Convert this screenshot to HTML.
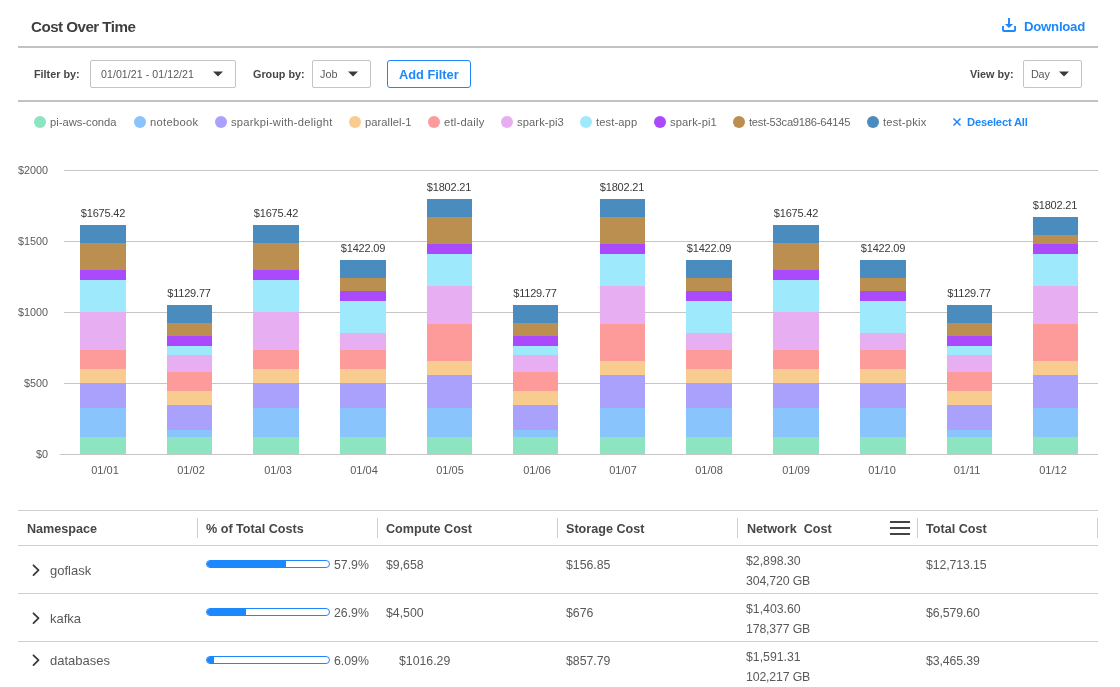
<!DOCTYPE html>
<html><head><meta charset="utf-8"><title>Cost Over Time</title>
<style>
html,body{margin:0;padding:0;background:#fff;width:1120px;height:687px;overflow:hidden;}
body{position:relative;font-family:"Liberation Sans", sans-serif;}
.t{position:absolute;line-height:1;white-space:nowrap;will-change:transform;}
.r{position:absolute;}
</style></head><body>
<div class="t" style="left:30.50px;top:19.13px;font-size:15.2px;color:#3f3f3f;font-weight:bold;letter-spacing:-0.55px;">Cost Over Time</div>
<svg class="r" style="left:1001px;top:17px" width="17" height="16" viewBox="0 0 17 16">
<path d="M8 1 V8.5" stroke="#1d87fc" stroke-width="1.9" fill="none"/>
<path d="M3.9 7 H12.1 L8 11.1 Z" fill="#1d87fc"/>
<path d="M2 9 V13 Q2 14.05 3.1 14.05 H13 Q14.1 14.05 14.1 13 V9" stroke="#1d87fc" stroke-width="1.9" fill="none"/>
</svg>
<div class="t" style="left:1024.00px;top:19.83px;font-size:13.2px;color:#1d87fc;font-weight:bold;letter-spacing:-0.25px;">Download</div>
<div class="r" style="left:18px;top:46px;width:1080px;height:2px;background:#c2c2c2;"></div>
<div class="t" style="left:34.10px;top:68.56px;font-size:10.8px;color:#464646;font-weight:bold;">Filter by:</div>
<div class="r" style="left:90px;top:60px;width:146px;height:28px;background:#fff;border:1px solid #c4c4c4;border-radius:2px;box-sizing:border-box;"></div>
<div class="t" style="left:100.70px;top:68.93px;font-size:10.6px;color:#595959;font-weight:normal;letter-spacing:0.06px;">01/01/21 - 01/12/21</div>
<svg class="r" style="left:213px;top:71px" width="10" height="6" viewBox="0 0 10 6"><path d="M0 0.5 H10 L5 5.5 Z" fill="#3a3a3a"/></svg>
<div class="t" style="left:252.90px;top:68.56px;font-size:10.8px;color:#464646;font-weight:bold;">Group by:</div>
<div class="r" style="left:312px;top:60px;width:59px;height:28px;background:#fff;border:1px solid #c4c4c4;border-radius:2px;box-sizing:border-box;"></div>
<div class="t" style="left:320.40px;top:68.76px;font-size:10.8px;color:#595959;font-weight:normal;">Job</div>
<svg class="r" style="left:348px;top:71px" width="10" height="6" viewBox="0 0 10 6"><path d="M0 0.5 H10 L5 5.5 Z" fill="#3a3a3a"/></svg>
<div class="r" style="left:387px;top:60px;width:84px;height:28px;background:#fff;border:1.5px solid #1d87fc;border-radius:3px;box-sizing:border-box;"></div>
<div class="t" style="left:399.20px;top:68.56px;font-size:12.8px;color:#1d87fc;font-weight:bold;">Add Filter</div>
<div class="t" style="left:970.30px;top:68.56px;font-size:10.8px;color:#464646;font-weight:bold;">View by:</div>
<div class="r" style="left:1023px;top:60px;width:59px;height:28px;background:#fff;border:1px solid #c4c4c4;border-radius:2px;box-sizing:border-box;"></div>
<div class="t" style="left:1031.40px;top:68.76px;font-size:10.8px;color:#595959;font-weight:normal;letter-spacing:-0.2px;">Day</div>
<svg class="r" style="left:1059px;top:71px" width="10" height="6" viewBox="0 0 10 6"><path d="M0 0.5 H10 L5 5.5 Z" fill="#3a3a3a"/></svg>
<div class="r" style="left:18px;top:100px;width:1080px;height:2px;background:#c2c2c2;"></div>
<div class="r" style="left:34px;top:116px;width:12px;height:12px;border-radius:50%;background:#8ce4c1"></div>
<div class="t" style="left:50.00px;top:116.52px;font-size:11.2px;color:#666;font-weight:normal;">pi-aws-conda</div>
<div class="r" style="left:134px;top:116px;width:12px;height:12px;border-radius:50%;background:#8ac4fc"></div>
<div class="t" style="left:150.00px;top:116.52px;font-size:11.2px;color:#666;font-weight:normal;letter-spacing:0.3px;">notebook</div>
<div class="r" style="left:215px;top:116px;width:12px;height:12px;border-radius:50%;background:#aaa1fc"></div>
<div class="t" style="left:231.00px;top:116.52px;font-size:11.2px;color:#666;font-weight:normal;letter-spacing:0.26px;">sparkpi-with-delight</div>
<div class="r" style="left:349px;top:116px;width:12px;height:12px;border-radius:50%;background:#f8cc8e"></div>
<div class="t" style="left:365.00px;top:116.52px;font-size:11.2px;color:#666;font-weight:normal;letter-spacing:0.05px;">parallel-1</div>
<div class="r" style="left:428px;top:116px;width:12px;height:12px;border-radius:50%;background:#fd9a9a"></div>
<div class="t" style="left:444.00px;top:116.52px;font-size:11.2px;color:#666;font-weight:normal;letter-spacing:0.22px;">etl-daily</div>
<div class="r" style="left:501px;top:116px;width:12px;height:12px;border-radius:50%;background:#e8aef2"></div>
<div class="t" style="left:517.00px;top:116.52px;font-size:11.2px;color:#666;font-weight:normal;letter-spacing:0.1px;">spark-pi3</div>
<div class="r" style="left:580px;top:116px;width:12px;height:12px;border-radius:50%;background:#9eeafc"></div>
<div class="t" style="left:596.00px;top:116.52px;font-size:11.2px;color:#666;font-weight:normal;letter-spacing:0.1px;">test-app</div>
<div class="r" style="left:654px;top:116px;width:12px;height:12px;border-radius:50%;background:#aa4afc"></div>
<div class="t" style="left:670.00px;top:116.52px;font-size:11.2px;color:#666;font-weight:normal;letter-spacing:0.1px;">spark-pi1</div>
<div class="r" style="left:733px;top:116px;width:12px;height:12px;border-radius:50%;background:#bb8f4f"></div>
<div class="t" style="left:749.00px;top:116.52px;font-size:11.2px;color:#666;font-weight:normal;letter-spacing:-0.24px;">test-53ca9186-64145</div>
<div class="r" style="left:867px;top:116px;width:12px;height:12px;border-radius:50%;background:#4a8cbd"></div>
<div class="t" style="left:883.00px;top:116.52px;font-size:11.2px;color:#666;font-weight:normal;letter-spacing:0.2px;">test-pkix</div>
<svg class="r" style="left:952px;top:117px" width="10" height="10" viewBox="0 0 10 10"><path d="M1.5 1.5 L8.5 8.5 M8.5 1.5 L1.5 8.5" stroke="#1d87fc" stroke-width="1.5"/></svg>
<div class="t" style="left:967.40px;top:116.52px;font-size:11.2px;color:#1d87fc;font-weight:bold;letter-spacing:-0.2px;">Deselect All</div>
<div class="r" style="left:64px;top:170px;width:1034px;height:1px;background:#c6c6c6;"></div>
<div class="t" style="right:1071.90px;top:164.66px;font-size:10.8px;color:#595959;font-weight:normal;">$2000</div>
<div class="r" style="left:64px;top:241px;width:1034px;height:1px;background:#c6c6c6;"></div>
<div class="t" style="right:1071.90px;top:235.66px;font-size:10.8px;color:#595959;font-weight:normal;">$1500</div>
<div class="r" style="left:64px;top:312px;width:1034px;height:1px;background:#c6c6c6;"></div>
<div class="t" style="right:1071.90px;top:306.66px;font-size:10.8px;color:#595959;font-weight:normal;">$1000</div>
<div class="r" style="left:64px;top:383px;width:1034px;height:1px;background:#c6c6c6;"></div>
<div class="t" style="right:1071.90px;top:377.66px;font-size:10.8px;color:#595959;font-weight:normal;">$500</div>
<div class="r" style="left:60px;top:454px;width:1038px;height:1px;background:#c6c6c6;"></div>
<div class="t" style="right:1071.90px;top:448.66px;font-size:10.8px;color:#595959;font-weight:normal;">$0</div>
<div class="r" style="left:80px;top:225px;width:46px;height:18px;background:#4a8cbd"></div>
<div class="r" style="left:80px;top:243px;width:46px;height:27px;background:#bb8f4f"></div>
<div class="r" style="left:80px;top:270px;width:46px;height:10px;background:#aa4afc"></div>
<div class="r" style="left:80px;top:280px;width:46px;height:32px;background:#9eeafc"></div>
<div class="r" style="left:80px;top:312px;width:46px;height:38px;background:#e8aef2"></div>
<div class="r" style="left:80px;top:350px;width:46px;height:19px;background:#fd9a9a"></div>
<div class="r" style="left:80px;top:369px;width:46px;height:14px;background:#f8cc8e"></div>
<div class="r" style="left:80px;top:383px;width:46px;height:25px;background:#aaa1fc"></div>
<div class="r" style="left:80px;top:408px;width:46px;height:29px;background:#8ac4fc"></div>
<div class="r" style="left:80px;top:437px;width:46px;height:17px;background:#8ce4c1"></div>
<div class="t" style="left:2.70px;width:200px;text-align:center;top:208.19px;font-size:11px;color:#3a3a3a;font-weight:normal;letter-spacing:-0.2px;">$1675.42</div>
<div class="t" style="left:5.30px;width:200px;text-align:center;top:464.99px;font-size:11px;color:#595959;font-weight:normal;">01/01</div>
<div class="r" style="left:167px;top:305px;width:45px;height:18px;background:#4a8cbd"></div>
<div class="r" style="left:167px;top:323px;width:45px;height:13px;background:#bb8f4f"></div>
<div class="r" style="left:167px;top:336px;width:45px;height:10px;background:#aa4afc"></div>
<div class="r" style="left:167px;top:346px;width:45px;height:9px;background:#9eeafc"></div>
<div class="r" style="left:167px;top:355px;width:45px;height:17px;background:#e8aef2"></div>
<div class="r" style="left:167px;top:372px;width:45px;height:19px;background:#fd9a9a"></div>
<div class="r" style="left:167px;top:391px;width:45px;height:14px;background:#f8cc8e"></div>
<div class="r" style="left:167px;top:405px;width:45px;height:25px;background:#aaa1fc"></div>
<div class="r" style="left:167px;top:430px;width:45px;height:7px;background:#8ac4fc"></div>
<div class="r" style="left:167px;top:437px;width:45px;height:17px;background:#8ce4c1"></div>
<div class="t" style="left:89.20px;width:200px;text-align:center;top:288.19px;font-size:11px;color:#3a3a3a;font-weight:normal;letter-spacing:-0.2px;">$1129.77</div>
<div class="t" style="left:91.20px;width:200px;text-align:center;top:464.99px;font-size:11px;color:#595959;font-weight:normal;">01/02</div>
<div class="r" style="left:253px;top:225px;width:46px;height:18px;background:#4a8cbd"></div>
<div class="r" style="left:253px;top:243px;width:46px;height:27px;background:#bb8f4f"></div>
<div class="r" style="left:253px;top:270px;width:46px;height:10px;background:#aa4afc"></div>
<div class="r" style="left:253px;top:280px;width:46px;height:32px;background:#9eeafc"></div>
<div class="r" style="left:253px;top:312px;width:46px;height:38px;background:#e8aef2"></div>
<div class="r" style="left:253px;top:350px;width:46px;height:19px;background:#fd9a9a"></div>
<div class="r" style="left:253px;top:369px;width:46px;height:14px;background:#f8cc8e"></div>
<div class="r" style="left:253px;top:383px;width:46px;height:25px;background:#aaa1fc"></div>
<div class="r" style="left:253px;top:408px;width:46px;height:29px;background:#8ac4fc"></div>
<div class="r" style="left:253px;top:437px;width:46px;height:17px;background:#8ce4c1"></div>
<div class="t" style="left:175.70px;width:200px;text-align:center;top:208.19px;font-size:11px;color:#3a3a3a;font-weight:normal;letter-spacing:-0.2px;">$1675.42</div>
<div class="t" style="left:177.50px;width:200px;text-align:center;top:464.99px;font-size:11px;color:#595959;font-weight:normal;">01/03</div>
<div class="r" style="left:340px;top:260px;width:46px;height:18px;background:#4a8cbd"></div>
<div class="r" style="left:340px;top:278px;width:46px;height:13px;background:#bb8f4f"></div>
<div class="r" style="left:340px;top:291px;width:46px;height:10px;background:#aa4afc"></div>
<div class="r" style="left:340px;top:301px;width:46px;height:32px;background:#9eeafc"></div>
<div class="r" style="left:340px;top:333px;width:46px;height:17px;background:#e8aef2"></div>
<div class="r" style="left:340px;top:350px;width:46px;height:19px;background:#fd9a9a"></div>
<div class="r" style="left:340px;top:369px;width:46px;height:14px;background:#f8cc8e"></div>
<div class="r" style="left:340px;top:383px;width:46px;height:25px;background:#aaa1fc"></div>
<div class="r" style="left:340px;top:408px;width:46px;height:29px;background:#8ac4fc"></div>
<div class="r" style="left:340px;top:437px;width:46px;height:17px;background:#8ce4c1"></div>
<div class="t" style="left:262.70px;width:200px;text-align:center;top:243.19px;font-size:11px;color:#3a3a3a;font-weight:normal;letter-spacing:-0.2px;">$1422.09</div>
<div class="t" style="left:263.90px;width:200px;text-align:center;top:464.99px;font-size:11px;color:#595959;font-weight:normal;">01/04</div>
<div class="r" style="left:427px;top:199px;width:45px;height:18px;background:#4a8cbd"></div>
<div class="r" style="left:427px;top:217px;width:45px;height:27px;background:#bb8f4f"></div>
<div class="r" style="left:427px;top:244px;width:45px;height:10px;background:#aa4afc"></div>
<div class="r" style="left:427px;top:254px;width:45px;height:32px;background:#9eeafc"></div>
<div class="r" style="left:427px;top:286px;width:45px;height:38px;background:#e8aef2"></div>
<div class="r" style="left:427px;top:324px;width:45px;height:37px;background:#fd9a9a"></div>
<div class="r" style="left:427px;top:361px;width:45px;height:14px;background:#f8cc8e"></div>
<div class="r" style="left:427px;top:375px;width:45px;height:33px;background:#aaa1fc"></div>
<div class="r" style="left:427px;top:408px;width:45px;height:29px;background:#8ac4fc"></div>
<div class="r" style="left:427px;top:437px;width:45px;height:17px;background:#8ce4c1"></div>
<div class="t" style="left:349.20px;width:200px;text-align:center;top:182.19px;font-size:11px;color:#3a3a3a;font-weight:normal;letter-spacing:-0.2px;">$1802.21</div>
<div class="t" style="left:350.40px;width:200px;text-align:center;top:464.99px;font-size:11px;color:#595959;font-weight:normal;">01/05</div>
<div class="r" style="left:513px;top:305px;width:45px;height:18px;background:#4a8cbd"></div>
<div class="r" style="left:513px;top:323px;width:45px;height:13px;background:#bb8f4f"></div>
<div class="r" style="left:513px;top:336px;width:45px;height:10px;background:#aa4afc"></div>
<div class="r" style="left:513px;top:346px;width:45px;height:9px;background:#9eeafc"></div>
<div class="r" style="left:513px;top:355px;width:45px;height:17px;background:#e8aef2"></div>
<div class="r" style="left:513px;top:372px;width:45px;height:19px;background:#fd9a9a"></div>
<div class="r" style="left:513px;top:391px;width:45px;height:14px;background:#f8cc8e"></div>
<div class="r" style="left:513px;top:405px;width:45px;height:25px;background:#aaa1fc"></div>
<div class="r" style="left:513px;top:430px;width:45px;height:7px;background:#8ac4fc"></div>
<div class="r" style="left:513px;top:437px;width:45px;height:17px;background:#8ce4c1"></div>
<div class="t" style="left:435.20px;width:200px;text-align:center;top:288.19px;font-size:11px;color:#3a3a3a;font-weight:normal;letter-spacing:-0.2px;">$1129.77</div>
<div class="t" style="left:436.80px;width:200px;text-align:center;top:464.99px;font-size:11px;color:#595959;font-weight:normal;">01/06</div>
<div class="r" style="left:600px;top:199px;width:45px;height:18px;background:#4a8cbd"></div>
<div class="r" style="left:600px;top:217px;width:45px;height:27px;background:#bb8f4f"></div>
<div class="r" style="left:600px;top:244px;width:45px;height:10px;background:#aa4afc"></div>
<div class="r" style="left:600px;top:254px;width:45px;height:32px;background:#9eeafc"></div>
<div class="r" style="left:600px;top:286px;width:45px;height:38px;background:#e8aef2"></div>
<div class="r" style="left:600px;top:324px;width:45px;height:37px;background:#fd9a9a"></div>
<div class="r" style="left:600px;top:361px;width:45px;height:14px;background:#f8cc8e"></div>
<div class="r" style="left:600px;top:375px;width:45px;height:33px;background:#aaa1fc"></div>
<div class="r" style="left:600px;top:408px;width:45px;height:29px;background:#8ac4fc"></div>
<div class="r" style="left:600px;top:437px;width:45px;height:17px;background:#8ce4c1"></div>
<div class="t" style="left:522.20px;width:200px;text-align:center;top:182.19px;font-size:11px;color:#3a3a3a;font-weight:normal;letter-spacing:-0.2px;">$1802.21</div>
<div class="t" style="left:523.00px;width:200px;text-align:center;top:464.99px;font-size:11px;color:#595959;font-weight:normal;">01/07</div>
<div class="r" style="left:686px;top:260px;width:46px;height:18px;background:#4a8cbd"></div>
<div class="r" style="left:686px;top:278px;width:46px;height:13px;background:#bb8f4f"></div>
<div class="r" style="left:686px;top:291px;width:46px;height:10px;background:#aa4afc"></div>
<div class="r" style="left:686px;top:301px;width:46px;height:32px;background:#9eeafc"></div>
<div class="r" style="left:686px;top:333px;width:46px;height:17px;background:#e8aef2"></div>
<div class="r" style="left:686px;top:350px;width:46px;height:19px;background:#fd9a9a"></div>
<div class="r" style="left:686px;top:369px;width:46px;height:14px;background:#f8cc8e"></div>
<div class="r" style="left:686px;top:383px;width:46px;height:25px;background:#aaa1fc"></div>
<div class="r" style="left:686px;top:408px;width:46px;height:29px;background:#8ac4fc"></div>
<div class="r" style="left:686px;top:437px;width:46px;height:17px;background:#8ce4c1"></div>
<div class="t" style="left:608.70px;width:200px;text-align:center;top:243.19px;font-size:11px;color:#3a3a3a;font-weight:normal;letter-spacing:-0.2px;">$1422.09</div>
<div class="t" style="left:609.30px;width:200px;text-align:center;top:464.99px;font-size:11px;color:#595959;font-weight:normal;">01/08</div>
<div class="r" style="left:773px;top:225px;width:46px;height:18px;background:#4a8cbd"></div>
<div class="r" style="left:773px;top:243px;width:46px;height:27px;background:#bb8f4f"></div>
<div class="r" style="left:773px;top:270px;width:46px;height:10px;background:#aa4afc"></div>
<div class="r" style="left:773px;top:280px;width:46px;height:32px;background:#9eeafc"></div>
<div class="r" style="left:773px;top:312px;width:46px;height:38px;background:#e8aef2"></div>
<div class="r" style="left:773px;top:350px;width:46px;height:19px;background:#fd9a9a"></div>
<div class="r" style="left:773px;top:369px;width:46px;height:14px;background:#f8cc8e"></div>
<div class="r" style="left:773px;top:383px;width:46px;height:25px;background:#aaa1fc"></div>
<div class="r" style="left:773px;top:408px;width:46px;height:29px;background:#8ac4fc"></div>
<div class="r" style="left:773px;top:437px;width:46px;height:17px;background:#8ce4c1"></div>
<div class="t" style="left:695.70px;width:200px;text-align:center;top:208.19px;font-size:11px;color:#3a3a3a;font-weight:normal;letter-spacing:-0.2px;">$1675.42</div>
<div class="t" style="left:695.90px;width:200px;text-align:center;top:464.99px;font-size:11px;color:#595959;font-weight:normal;">01/09</div>
<div class="r" style="left:860px;top:260px;width:46px;height:18px;background:#4a8cbd"></div>
<div class="r" style="left:860px;top:278px;width:46px;height:13px;background:#bb8f4f"></div>
<div class="r" style="left:860px;top:291px;width:46px;height:10px;background:#aa4afc"></div>
<div class="r" style="left:860px;top:301px;width:46px;height:32px;background:#9eeafc"></div>
<div class="r" style="left:860px;top:333px;width:46px;height:17px;background:#e8aef2"></div>
<div class="r" style="left:860px;top:350px;width:46px;height:19px;background:#fd9a9a"></div>
<div class="r" style="left:860px;top:369px;width:46px;height:14px;background:#f8cc8e"></div>
<div class="r" style="left:860px;top:383px;width:46px;height:25px;background:#aaa1fc"></div>
<div class="r" style="left:860px;top:408px;width:46px;height:29px;background:#8ac4fc"></div>
<div class="r" style="left:860px;top:437px;width:46px;height:17px;background:#8ce4c1"></div>
<div class="t" style="left:782.70px;width:200px;text-align:center;top:243.19px;font-size:11px;color:#3a3a3a;font-weight:normal;letter-spacing:-0.2px;">$1422.09</div>
<div class="t" style="left:781.80px;width:200px;text-align:center;top:464.99px;font-size:11px;color:#595959;font-weight:normal;">01/10</div>
<div class="r" style="left:947px;top:305px;width:45px;height:18px;background:#4a8cbd"></div>
<div class="r" style="left:947px;top:323px;width:45px;height:13px;background:#bb8f4f"></div>
<div class="r" style="left:947px;top:336px;width:45px;height:10px;background:#aa4afc"></div>
<div class="r" style="left:947px;top:346px;width:45px;height:9px;background:#9eeafc"></div>
<div class="r" style="left:947px;top:355px;width:45px;height:17px;background:#e8aef2"></div>
<div class="r" style="left:947px;top:372px;width:45px;height:19px;background:#fd9a9a"></div>
<div class="r" style="left:947px;top:391px;width:45px;height:14px;background:#f8cc8e"></div>
<div class="r" style="left:947px;top:405px;width:45px;height:25px;background:#aaa1fc"></div>
<div class="r" style="left:947px;top:430px;width:45px;height:7px;background:#8ac4fc"></div>
<div class="r" style="left:947px;top:437px;width:45px;height:17px;background:#8ce4c1"></div>
<div class="t" style="left:869.20px;width:200px;text-align:center;top:288.19px;font-size:11px;color:#3a3a3a;font-weight:normal;letter-spacing:-0.2px;">$1129.77</div>
<div class="t" style="left:866.90px;width:200px;text-align:center;top:464.99px;font-size:11px;color:#595959;font-weight:normal;">01/11</div>
<div class="r" style="left:1033px;top:217px;width:45px;height:18px;background:#4a8cbd"></div>
<div class="r" style="left:1033px;top:235px;width:45px;height:9px;background:#bb8f4f"></div>
<div class="r" style="left:1033px;top:244px;width:45px;height:10px;background:#aa4afc"></div>
<div class="r" style="left:1033px;top:254px;width:45px;height:32px;background:#9eeafc"></div>
<div class="r" style="left:1033px;top:286px;width:45px;height:38px;background:#e8aef2"></div>
<div class="r" style="left:1033px;top:324px;width:45px;height:37px;background:#fd9a9a"></div>
<div class="r" style="left:1033px;top:361px;width:45px;height:14px;background:#f8cc8e"></div>
<div class="r" style="left:1033px;top:375px;width:45px;height:33px;background:#aaa1fc"></div>
<div class="r" style="left:1033px;top:408px;width:45px;height:29px;background:#8ac4fc"></div>
<div class="r" style="left:1033px;top:437px;width:45px;height:17px;background:#8ce4c1"></div>
<div class="t" style="left:955.20px;width:200px;text-align:center;top:200.19px;font-size:11px;color:#3a3a3a;font-weight:normal;letter-spacing:-0.2px;">$1802.21</div>
<div class="t" style="left:952.50px;width:200px;text-align:center;top:464.99px;font-size:11px;color:#595959;font-weight:normal;">01/12</div>
<div class="r" style="left:18px;top:510px;width:1080px;height:1px;background:#cfcfcf;"></div>
<div class="r" style="left:18px;top:545px;width:1080px;height:1px;background:#cfcfcf;"></div>
<div class="r" style="left:18px;top:593px;width:1080px;height:1px;background:#cfcfcf;"></div>
<div class="r" style="left:18px;top:641px;width:1080px;height:1px;background:#cfcfcf;"></div>
<div class="r" style="left:197px;top:518px;width:1px;height:20px;background:#cfcfcf;"></div>
<div class="r" style="left:377px;top:518px;width:1px;height:20px;background:#cfcfcf;"></div>
<div class="r" style="left:557px;top:518px;width:1px;height:20px;background:#cfcfcf;"></div>
<div class="r" style="left:737px;top:518px;width:1px;height:20px;background:#cfcfcf;"></div>
<div class="r" style="left:917px;top:518px;width:1px;height:20px;background:#cfcfcf;"></div>
<div class="r" style="left:1097px;top:518px;width:1px;height:20px;background:#cfcfcf;"></div>
<div class="t" style="left:26.70px;top:522.53px;font-size:12.6px;color:#464646;font-weight:bold;">Namespace</div>
<div class="t" style="left:206.40px;top:522.53px;font-size:12.6px;color:#464646;font-weight:bold;">% of Total Costs</div>
<div class="t" style="left:386.30px;top:522.53px;font-size:12.6px;color:#464646;font-weight:bold;">Compute Cost</div>
<div class="t" style="left:566.00px;top:522.53px;font-size:12.6px;color:#464646;font-weight:bold;">Storage Cost</div>
<div class="t" style="left:746.60px;top:522.53px;font-size:12.6px;color:#464646;font-weight:bold;">Network&nbsp; Cost</div>
<div class="t" style="left:926.40px;top:522.53px;font-size:12.6px;color:#464646;font-weight:bold;">Total Cost</div>
<div class="r" style="left:890px;top:521px;width:20px;height:2px;background:#444;"></div>
<div class="r" style="left:890px;top:527px;width:20px;height:2px;background:#444;"></div>
<div class="r" style="left:890px;top:533px;width:20px;height:2px;background:#444;"></div>
<svg class="r" style="left:31px;top:564px" width="10" height="13" viewBox="0 0 10 13"><path d="M2.5 1.3 L7.5 6.2 L2.5 11.1" stroke="#3a3a3a" stroke-width="1.8" stroke-linecap="round" stroke-linejoin="round" fill="none"/></svg>
<div class="t" style="left:50.40px;top:564.00px;font-size:13px;color:#595959;font-weight:normal;">goflask</div>
<div class="r" style="left:206px;top:560px;width:124px;height:8px;border:1px solid #1d87fc;border-radius:4px;box-sizing:border-box;overflow:hidden;background:#fff"><div style="width:79px;height:100%;background:#1d87fc"></div></div>
<div class="t" style="left:334.30px;top:558.99px;font-size:12.3px;color:#595959;font-weight:normal;">57.9%</div>
<div class="t" style="left:386.30px;top:558.99px;font-size:12.3px;color:#595959;font-weight:normal;">$9,658</div>
<div class="t" style="left:566.00px;top:558.99px;font-size:12.3px;color:#595959;font-weight:normal;">$156.85</div>
<div class="t" style="left:745.90px;top:555.09px;font-size:12.3px;color:#595959;font-weight:normal;">$2,898.30</div>
<div class="t" style="left:745.90px;top:574.79px;font-size:12.3px;color:#595959;font-weight:normal;letter-spacing:-0.15px;">304,720 GB</div>
<div class="t" style="left:925.90px;top:558.99px;font-size:12.3px;color:#595959;font-weight:normal;letter-spacing:-0.1px;">$12,713.15</div>
<svg class="r" style="left:31px;top:612px" width="10" height="13" viewBox="0 0 10 13"><path d="M2.5 1.3 L7.5 6.2 L2.5 11.1" stroke="#3a3a3a" stroke-width="1.8" stroke-linecap="round" stroke-linejoin="round" fill="none"/></svg>
<div class="t" style="left:50.40px;top:612.00px;font-size:13px;color:#595959;font-weight:normal;">kafka</div>
<div class="r" style="left:206px;top:608px;width:124px;height:8px;border:1px solid #1d87fc;border-radius:4px;box-sizing:border-box;overflow:hidden;background:#fff"><div style="width:39px;height:100%;background:#1d87fc"></div></div>
<div class="t" style="left:334.30px;top:606.99px;font-size:12.3px;color:#595959;font-weight:normal;">26.9%</div>
<div class="t" style="left:386.30px;top:606.99px;font-size:12.3px;color:#595959;font-weight:normal;">$4,500</div>
<div class="t" style="left:566.00px;top:606.99px;font-size:12.3px;color:#595959;font-weight:normal;">$676</div>
<div class="t" style="left:745.90px;top:603.09px;font-size:12.3px;color:#595959;font-weight:normal;">$1,403.60</div>
<div class="t" style="left:745.90px;top:622.79px;font-size:12.3px;color:#595959;font-weight:normal;letter-spacing:-0.15px;">178,377 GB</div>
<div class="t" style="left:925.90px;top:606.99px;font-size:12.3px;color:#595959;font-weight:normal;letter-spacing:-0.1px;">$6,579.60</div>
<svg class="r" style="left:31px;top:654px" width="10" height="13" viewBox="0 0 10 13"><path d="M2.5 1.3 L7.5 6.2 L2.5 11.1" stroke="#3a3a3a" stroke-width="1.8" stroke-linecap="round" stroke-linejoin="round" fill="none"/></svg>
<div class="t" style="left:50.40px;top:653.70px;font-size:13px;color:#595959;font-weight:normal;">databases</div>
<div class="r" style="left:206px;top:656px;width:124px;height:8px;border:1px solid #1d87fc;border-radius:4px;box-sizing:border-box;overflow:hidden;background:#fff"><div style="width:7px;height:100%;background:#1d87fc"></div></div>
<div class="t" style="left:334.30px;top:654.99px;font-size:12.3px;color:#595959;font-weight:normal;">6.09%</div>
<div class="t" style="left:398.50px;top:654.99px;font-size:12.3px;color:#595959;font-weight:normal;">$1016.29</div>
<div class="t" style="left:566.00px;top:654.99px;font-size:12.3px;color:#595959;font-weight:normal;">$857.79</div>
<div class="t" style="left:745.90px;top:651.09px;font-size:12.3px;color:#595959;font-weight:normal;">$1,591.31</div>
<div class="t" style="left:745.90px;top:670.79px;font-size:12.3px;color:#595959;font-weight:normal;letter-spacing:-0.15px;">102,217 GB</div>
<div class="t" style="left:925.90px;top:654.99px;font-size:12.3px;color:#595959;font-weight:normal;letter-spacing:-0.1px;">$3,465.39</div>

</body></html>
